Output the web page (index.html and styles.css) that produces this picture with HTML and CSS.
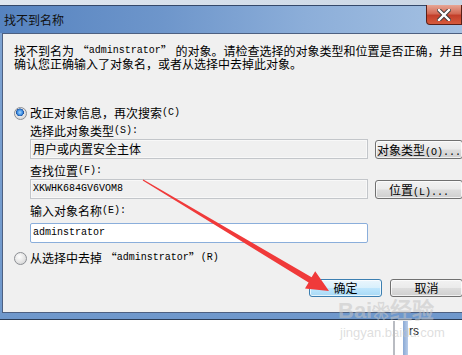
FILE: index.html
```html
<!DOCTYPE html>
<html lang="zh-CN">
<head>
  <meta charset="UTF-8">
  <title>找不到名称</title>
  <link rel="stylesheet" href="styles.css">
</head>
<body>
  <div class="screen">
    <div class="desk-top"></div>

    <!-- Boîte de dialogue -->
    <div class="dialog">
      <div class="titlebar">
        <span class="title">找不到名称</span>
        <span class="close">
          <svg width="14" height="12" viewBox="0 0 14 12">
            <path d="M2 1 L12 11 M12 1 L2 11" stroke="#3a3a3a" stroke-width="4.2" stroke-linecap="square"/>
            <path d="M2 1 L12 11 M12 1 L2 11" stroke="#fff" stroke-width="2.4" stroke-linecap="square"/>
          </svg>
        </span>
      </div>
      <div class="frame">
        <div class="client">
          <div class="desc">
            <div class="desc-line">找不到名为 “<span class="en">adminstrator</span>” 的对象。请检查选择的对象类型和位置是否正确，并且</div>
            <div class="desc-line">确认您正确输入了对象名，或者从选择中去掉此对象。</div>
          </div>

          <div class="radio-row first"><span class="radio checked"></span>改正对象信息，再次搜索<span class="en">(C)</span></div>

          <div class="group">
            <div class="field-label">选择此对象类型<span class="en">(S):</span></div>
            <div class="row">
              <div class="box readonly">用户或内置安全主体</div>
              <button class="btn">对象类型<span class="en">(O)...</span></button>
            </div>

            <div class="field-label">查找位置<span class="en">(F):</span></div>
            <div class="row">
              <div class="box readonly"><span class="en">XKWHK684GV6VOM8</span></div>
              <button class="btn">位置<span class="en">(L)...</span></button>
            </div>

            <div class="field-label">输入对象名称<span class="en">(E):</span></div>
            <div class="row">
              <div class="box edit"><span class="en">adminstrator</span></div>
              <div class="spacer"></div>
            </div>
          </div>

          <div class="radio-row second"><span class="radio"></span>从选择中去掉 “<span class="en">adminstrator</span>”<span class="en">(R)</span></div>

          <div class="actions">
            <button class="btn default">确定</button>
            <button class="btn">取消</button>
          </div>
        </div>
      </div>
    </div>

    <!-- Fenêtre en arrière-plan -->
    <div class="behind">
      <span class="line-gray"></span>
      <span class="line-blue"></span>
      <span class="rs">rs</span>
    </div>

    <!-- Filigrane -->
    <div class="watermark">
      <div class="wm-big">Bai<span class="paw">❀</span>经验</div>
      <div class="wm-small">jingyan.baidu.com</div>
    </div>

    <svg class="arrow" width="462" height="355" viewBox="0 0 462 355">
      <polygon points="142.7,180.4 143.3,179.6 311.6,277.2 315.2,271.2 329,291 305,288.4 308.6,282.4" fill="#f03a3a"/>
    </svg>
  </div>
</body>
</html>
```

FILE: styles.css
```css
html, body {
  margin: 0;
  padding: 0;
  background: #fff;
}
.screen {
  position: relative;
  width: 462px;
  height: 355px;
  overflow: hidden;
  background: #fff;
  font-family: "Noto Sans CJK SC", sans-serif;
  font-size: 12px;
  line-height: 12px;
  color: #000;
}
.en {
  font-family: "Liberation Mono", monospace;
  font-size: 10px;
  line-height: 10px;
}
.desk-top {
  height: 5px;
  background: linear-gradient(to right, #dfe6ef, #d3dde9 60%, #c9d5e4);
}
.dialog {
  width: 470px;
  border-bottom: 1px solid #2b3d57;
}
.titlebar {
  display: flex;
  justify-content: space-between;
  align-items: flex-start;
  height: 27px;
  border-top: 1px solid #34486a;
  background: linear-gradient(to right, #5683c0 0%, #6e96cb 35%, #8caed9 65%, #a6c2e3 100%);
}
.title {
  padding: 8px 0 0 4px;
  color: #111;
  font-size: 12px;
}
.close {
  display: flex;
  align-items: center;
  justify-content: center;
  width: 34px;
  height: 19px;
  margin: -1px 8px 0 0;
  border: 1px solid #5a2018;
  border-top: none;
  border-radius: 0 0 0 4px;
  background: linear-gradient(#e7a595 0%, #d36a55 45%, #c33f2a 55%, #d65a3c 100%);
}
.frame {
  padding: 0 0 6px 2px;
  background: linear-gradient(#7ea3d2, #6f98cc);
}
.client {
  height: 278px;
  padding: 0 7px 0 11px;
  border: 1px solid #4d6081;
  border-right: none;
  background: #f0f0f0;
}
.desc {
  display: flex;
  flex-direction: column;
  gap: 1px;
  height: 25px;
  margin-top: 11px;
  white-space: nowrap;
}
.desc-line {
  display: flex;
  align-items: center;
  height: 12px;
}
.radio-row {
  display: flex;
  align-items: center;
  height: 16px;
  white-space: nowrap;
}
.radio-row.first {
  margin-top: 35px;
}
.radio-row.second {
  margin-top: 7px;
}
.radio {
  box-sizing: border-box;
  width: 13px;
  height: 13px;
  margin-right: 3px;
  border: 1px solid #8c8f94;
  border-radius: 50%;
  background: radial-gradient(circle at 40% 35%, #fdfdfd 0%, #e4e4e4 55%, #c9cbce 100%);
}
.radio.checked {
  background:
    radial-gradient(circle at 45% 40%, #a8d8ff 0%, #3b8be0 30%, #1c4f9c 42%, transparent 46%),
    radial-gradient(circle at 40% 35%, #fdfdfd 0%, #e4e4e4 55%, #c9cbce 100%);
}
.group {
  padding-left: 16px;
}
.field-label {
  display: flex;
  align-items: center;
  height: 16px;
  margin-top: 2px;
}
.row {
  display: flex;
  gap: 7px;
  align-items: flex-start;
}
.row + .field-label {
  margin-top: 4px;
}
.group .row:last-child {
  margin-top: 4px;
}
.box {
  box-sizing: border-box;
  display: flex;
  align-items: center;
  flex: 1;
  height: 20px;
  padding-left: 2px;
  white-space: nowrap;
}
.box.readonly {
  border: 1px solid #c3c6ca;
  box-shadow: inset 0 0 0 1px #f8f8f8;
  background: #f0f0f0;
}
.box.edit {
  border: 1px solid #8aaedb;
  border-radius: 2px;
  background: #fff;
}
.spacer {
  width: 88px;
}
.btn {
  box-sizing: border-box;
  width: 88px;
  height: 19px;
  margin-top: 1px;
  padding: 0;
  border: 1px solid #707070;
  border-radius: 3px;
  box-shadow: inset 0 0 0 1px rgba(255, 255, 255, 0.7);
  background: linear-gradient(#f2f2f2 0%, #ebebeb 48%, #dddddd 52%, #cfcfcf 100%);
  font-family: "Noto Sans CJK SC", sans-serif;
  font-size: 12px;
  line-height: 16px;
  color: #000;
  white-space: nowrap;
  overflow: hidden;
}
.actions {
  display: flex;
  justify-content: flex-end;
  gap: 8px;
  margin-top: 13px;
}
.actions .btn {
  width: 73px;
  height: 18px;
  margin-top: 0;
}
.btn.default {
  border-color: #3c7fb1;
  background: linear-gradient(#eaf6fd 0%, #d9f0fc 48%, #bee6fd 52%, #a7d9f5 100%);
}
.behind {
  position: absolute;
  left: 393px;
  top: 321px;
  width: 69px;
  height: 34px;
}
.line-gray {
  position: absolute;
  left: 0;
  top: 0;
  width: 2px;
  height: 34px;
  background: #b9bcc2;
}
.line-blue {
  position: absolute;
  left: 10px;
  top: 0;
  width: 5px;
  height: 34px;
  background: linear-gradient(to right, #8aa9d4, #b8cdea);
}
.rs {
  position: absolute;
  left: 16px;
  top: 4px;
  font-family: "Liberation Sans", sans-serif;
  font-size: 12px;
  color: #222;
}
.watermark {
  position: absolute;
  left: 338px;
  top: 298px;
  color: rgba(195, 195, 195, 0.55);
  font-family: "Liberation Sans", sans-serif;
  white-space: nowrap;
}
.wm-big {
  font-size: 22px;
  line-height: 26px;
  font-weight: bold;
}
.paw {
  font-size: 18px;
}
.wm-small {
  font-size: 13px;
  line-height: 16px;
  padding-left: 2px;
}
.arrow {
  position: absolute;
  left: 0;
  top: 0;
}
```
